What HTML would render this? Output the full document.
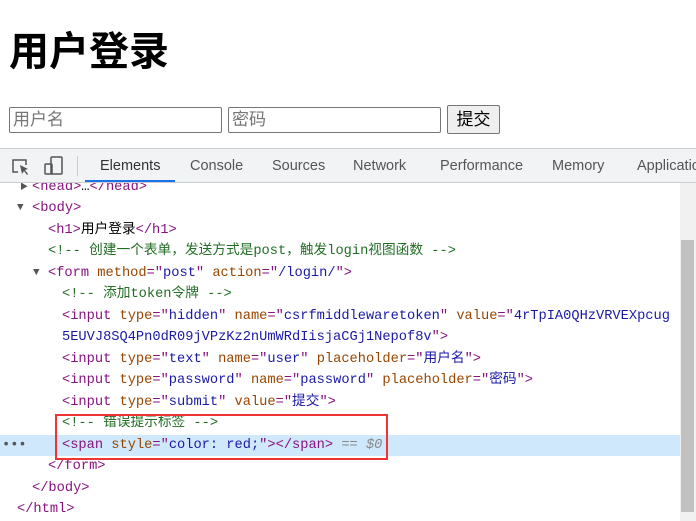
<!DOCTYPE html>
<html><head><meta charset="utf-8"><style>
*{margin:0;padding:0;box-sizing:border-box}
body{width:696px;height:521px;overflow:hidden;background:#fff;font-family:"Liberation Sans","Noto Sans CJK SC",sans-serif;position:relative}
h1{position:absolute;left:9px;top:28px;font-size:40px;font-weight:bold;line-height:48px;font-family:"Liberation Sans","Noto Sans CJK SC",sans-serif}
.inp{position:absolute;top:107px;height:26px;border:1px solid #767676;border-radius:2px;font-size:17px;color:#757575;padding:1px 3px;line-height:22px}
.btn{position:absolute;top:105px;left:447px;width:53px;height:29px;border:1px solid #767676;border-radius:2px;background:#efefef;font-size:17px;text-align:center;line-height:27px}
.tb{position:absolute;top:148px;left:0;width:696px;height:35px;background:#f1f3f4;border-top:1px solid #cacdd1;border-bottom:1px solid #cacdd1;z-index:5}
.tab{position:absolute;top:9px;font-size:14.5px;color:#555}
.code{position:absolute;top:178px;left:0;width:680px;font-family:"Liberation Mono","Noto Sans CJK SC",monospace;font-size:13.7px}
.l{height:21.5px;line-height:21.5px;white-space:pre;position:relative}
.t{color:#881280}.a{color:#994500}.v{color:#1a1aa6}.c{color:#236e25}.k{color:#222}
.tri{position:absolute;font-size:11px;color:#555;top:0}
</style></head><body>
<h1>用户登录</h1>
<div class="inp" style="left:9px;width:213px">用户名</div>
<div class="inp" style="left:228px;width:213px">密码</div>
<div class="btn">提交</div>
<div class="tb">
<svg style="position:absolute;left:11px;top:8px" width="20" height="20" viewBox="0 0 20 20" fill="none" stroke="#555" stroke-width="1.5"><path d="M7 15H2V3h13v5"/><path d="M9 8l8 4-3 1 3 4-1 1-3-4-2 3z" fill="#555" stroke="none"/></svg>
<svg style="position:absolute;left:43px;top:6px" width="22" height="22" viewBox="0 0 22 22" fill="none" stroke="#555" stroke-width="1.5"><rect x="8" y="2" width="11" height="17" rx="1"/><rect x="2" y="9" width="7" height="10" rx="1"/></svg>
<div style="position:absolute;left:77px;top:7px;width:1px;height:20px;background:#ccc"></div>
<span class="tab" style="left:100px;color:#333">Elements</span>
<div style="position:absolute;left:85px;top:31px;width:90px;height:2px;background:#1a73e8"></div>
<span class="tab" style="left:190px">Console</span>
<span class="tab" style="left:272px">Sources</span>
<span class="tab" style="left:353px">Network</span>
<span class="tab" style="left:440px">Performance</span>
<span class="tab" style="left:552px">Memory</span>
<span class="tab" style="left:637px">Application</span>
</div>
<div style="position:absolute;left:680px;top:183px;width:16px;height:338px;background:#f1f1f1"></div>
<div style="position:absolute;left:681px;top:240px;width:13px;height:272px;background:#c1c1c1"></div>
<div class="code">
<div class="l" style="padding-left:32px;height:20px;line-height:20px"><span class="tri" style="left:20px;font-size:8px">▶</span><span class="t">&lt;head&gt;</span>…<span class="t">&lt;/head&gt;</span></div>
<div class="l" style="padding-left:32px"><span class="tri" style="left:17px">▼</span><span class="t">&lt;body&gt;</span></div>
<div class="l" style="padding-left:48px"><span class="t">&lt;h1&gt;</span>用户登录<span class="t">&lt;/h1&gt;</span></div>
<div class="l c" style="padding-left:48px">&lt;!-- 创建一个表单，发送方式是post，触发login视图函数 --&gt;</div>
<div class="l" style="padding-left:48px"><span class="tri" style="left:33px">▼</span><span class="t">&lt;form </span><span class="a">method</span><span class="t">="</span><span class="v">post</span><span class="t">" </span><span class="a">action</span><span class="t">="</span><span class="v">/login/</span><span class="t">"&gt;</span></div>
<div class="l c" style="padding-left:62px">&lt;!-- 添加token令牌 --&gt;</div>
<div class="l" style="padding-left:62px"><span class="t">&lt;input </span><span class="a">type</span><span class="t">="</span><span class="v">hidden</span><span class="t">" </span><span class="a">name</span><span class="t">="</span><span class="v">csrfmiddlewaretoken</span><span class="t">" </span><span class="a">value</span><span class="t">="</span><span class="v">4rTpIA0QHzVRVEXpcug</span></div>
<div class="l" style="padding-left:62px"><span class="v">5EUVJ8SQ4Pn0dR09jVPzKz2nUmWRdIisjaCGj1Nepof8v</span><span class="t">"&gt;</span></div>
<div class="l" style="padding-left:62px"><span class="t">&lt;input </span><span class="a">type</span><span class="t">="</span><span class="v">text</span><span class="t">" </span><span class="a">name</span><span class="t">="</span><span class="v">user</span><span class="t">" </span><span class="a">placeholder</span><span class="t">="</span><span class="v">用户名</span><span class="t">"&gt;</span></div>
<div class="l" style="padding-left:62px"><span class="t">&lt;input </span><span class="a">type</span><span class="t">="</span><span class="v">password</span><span class="t">" </span><span class="a">name</span><span class="t">="</span><span class="v">password</span><span class="t">" </span><span class="a">placeholder</span><span class="t">="</span><span class="v">密码</span><span class="t">"&gt;</span></div>
<div class="l" style="padding-left:62px"><span class="t">&lt;input </span><span class="a">type</span><span class="t">="</span><span class="v">submit</span><span class="t">" </span><span class="a">value</span><span class="t">="</span><span class="v">提交</span><span class="t">"&gt;</span></div>
<div class="l c" style="padding-left:62px">&lt;!-- 错误提示标签 --&gt;</div>
<div class="l" style="padding-left:62px;background:#cfe8fc"><span style="position:absolute;left:2px;color:#555">•••</span><span class="t">&lt;span </span><span class="a">style</span><span class="t">="</span><span class="v">color: red;</span><span class="t">"&gt;&lt;/span&gt;</span><span style="color:#888"> == <i>$0</i></span></div>
<div class="l" style="padding-left:48px"><span class="t">&lt;/form&gt;</span></div>
<div class="l" style="padding-left:32px"><span class="t">&lt;/body&gt;</span></div>
<div class="l" style="padding-left:17px"><span class="t">&lt;/html&gt;</span></div>
</div>
<div style="position:absolute;left:55px;top:414px;width:333px;height:46px;border:2px solid #f03333"></div>
</body></html>
